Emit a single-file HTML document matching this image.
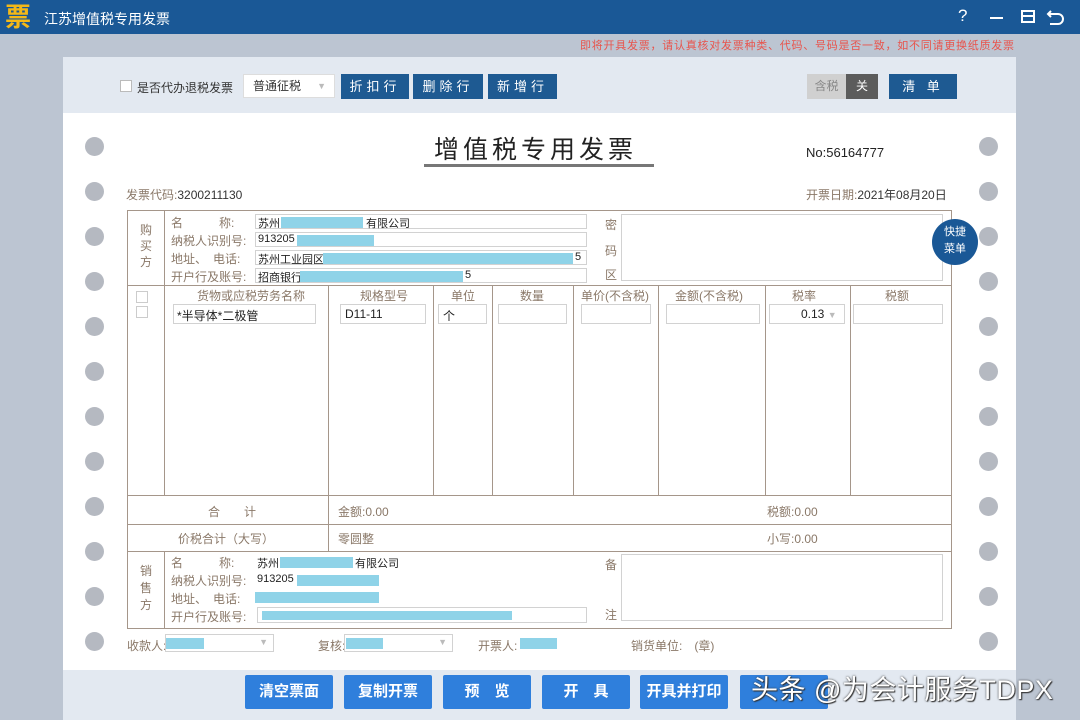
<!DOCTYPE html>
<html><head><meta charset="utf-8"><style>
*{margin:0;padding:0;box-sizing:border-box}
body{width:1080px;height:720px;overflow:hidden;background:#bcc5d2;font-family:"Liberation Sans","Noto Sans CJK SC",sans-serif;position:relative;font-size:12px;color:#333}
.a{position:absolute}
.hole{position:absolute;width:19px;height:19px;border-radius:50%;background:#b5b9c1}
.l{position:absolute;background:#a5968a}
.lb{position:absolute;color:#8a7868;font-size:12px;white-space:nowrap}
.box{position:absolute;border:1px solid #d2d2d2;background:#fff}
.bl{position:absolute;background:#8fd3e8;height:11px}
.tb{position:absolute;top:74px;height:25px;background:#1e5a92;color:#fff;font-size:13px;text-align:center;line-height:25px;letter-spacing:4px}
.bb{position:absolute;top:675px;height:34px;width:88px;background:#2f7fdc;color:#fff;font-size:15px;text-align:center;line-height:34px;border-radius:2px;font-weight:bold}
.t{position:absolute;font-size:11px;color:#222;white-space:nowrap}
</style></head><body>
<div class="a" style="left:0;top:0;width:1080px;height:34px;background:#1a5896"></div>
<div class="a" style="left:5px;top:2px;font-size:26px;font-weight:bold;color:#f3b818;line-height:30px">票</div>
<div class="a" style="left:44px;top:9px;color:#fff;font-size:14px">江苏增值税专用发票</div>
<div class="a" style="left:958px;top:6px;color:#fff;font-size:17px">?</div>
<div class="a" style="left:990px;top:17px;width:13px;height:2px;background:#fff"></div>
<div class="a" style="left:1021px;top:10px;width:14px;height:13px;border:2px solid #fff"></div>
<div class="a" style="left:1021px;top:15px;width:14px;height:2px;background:#fff"></div>
<svg class="a" style="left:1046px;top:7px" width="20" height="20"><path d="M5 4 L2 7 L5 10 M2 7 H12 A5 5 0 0 1 12 17 H4" fill="none" stroke="#fff" stroke-width="2"/></svg>
<div class="a" style="left:580px;top:37px;color:#e8544c;font-size:11px;letter-spacing:0.75px">即将开具发票，请认真核对发票种类、代码、号码是否一致，如不同请更换纸质发票</div>
<div class="a" style="left:63px;top:57px;width:953px;height:663px;background:#e3e9f1"></div>
<div class="a" style="left:63px;top:113px;width:953px;height:557px;background:#fff"></div>
<div class="a" style="left:120px;top:80px;width:12px;height:12px;border:1px solid #bbb;background:#fff"></div>
<div class="a" style="left:137px;top:79px;font-size:12px">是否代办退税发票</div>
<div class="a" style="left:243px;top:74px;width:92px;height:24px;background:#fff;border:1px solid #ddd;padding-left:9px;line-height:22px">普通征税<span style="position:absolute;right:8px;color:#bbb;font-size:9px">▼</span></div>
<div class="tb" style="left:341px;width:68px">折扣行</div>
<div class="tb" style="left:413px;width:70px">删除行</div>
<div class="tb" style="left:488px;width:69px">新增行</div>
<div class="a" style="left:807px;top:74px;width:39px;height:25px;background:#d0d0d0;color:#888;line-height:25px;text-align:center">含税</div>
<div class="a" style="left:846px;top:74px;width:32px;height:25px;background:#5c5c5c;color:#fff;line-height:25px;text-align:center">关</div>
<div class="tb" style="left:889px;width:68px">清 单</div>

<div class="a" style="left:434px;top:130px;font-size:25px;letter-spacing:4px;color:#222">增值税专用发票</div>
<div class="a" style="left:424px;top:164px;width:230px;height:3px;background:#777"></div>
<div class="a" style="left:806px;top:145px;font-size:13px;color:#222">No:56164777</div>
<div class="a" style="left:126px;top:186px;font-size:12px"><span style="color:#8a7868">发票代码:</span>3200211130</div>
<div class="a" style="left:806px;top:186px;font-size:12px"><span style="color:#8a7868">开票日期:</span>2021年08月20日</div>

<div class="l" style="left:127px;top:210px;width:825px;height:1px"></div>
<div class="l" style="left:127px;top:285px;width:825px;height:1px"></div>
<div class="l" style="left:127px;top:495px;width:825px;height:1px"></div>
<div class="l" style="left:127px;top:524px;width:825px;height:1px"></div>
<div class="l" style="left:127px;top:551px;width:825px;height:1px"></div>
<div class="l" style="left:127px;top:628px;width:825px;height:1px"></div>
<div class="l" style="left:127px;top:210px;width:1px;height:419px"></div>
<div class="l" style="left:951px;top:210px;width:1px;height:419px"></div>
<div class="l" style="left:164px;top:210px;width:1px;height:285px"></div>
<div class="l" style="left:164px;top:551px;width:1px;height:77px"></div>
<div class="l" style="left:328px;top:285px;width:1px;height:266px"></div>
<div class="l" style="left:433px;top:285px;width:1px;height:210px"></div>
<div class="l" style="left:492px;top:285px;width:1px;height:210px"></div>
<div class="l" style="left:573px;top:285px;width:1px;height:210px"></div>
<div class="l" style="left:658px;top:285px;width:1px;height:210px"></div>
<div class="l" style="left:765px;top:285px;width:1px;height:210px"></div>
<div class="l" style="left:850px;top:285px;width:1px;height:210px"></div>

<div class="lb" style="left:140px;top:222px;line-height:16px;white-space:normal;width:12px">购买方</div>
<div class="lb" style="left:171px;top:214px">名　　　称:</div>
<div class="lb" style="left:171px;top:232px">纳税人识别号:</div>
<div class="lb" style="left:171px;top:250px">地址、　电话:</div>
<div class="lb" style="left:171px;top:268px">开户行及账号:</div>
<div class="box" style="left:255px;top:214px;width:332px;height:15px"></div>
<div class="box" style="left:255px;top:232px;width:332px;height:15px"></div>
<div class="box" style="left:255px;top:250px;width:332px;height:15px"></div>
<div class="box" style="left:255px;top:268px;width:332px;height:15px"></div>
<div class="t" style="left:258px;top:215px">苏州</div><div class="bl" style="left:281px;top:217px;width:82px"></div><div class="t" style="left:366px;top:215px">有限公司</div>
<div class="t" style="left:258px;top:233px">913205</div><div class="bl" style="left:297px;top:235px;width:77px"></div>
<div class="t" style="left:258px;top:251px">苏州工业园区</div><div class="bl" style="left:323px;top:253px;width:250px"></div><div class="t" style="left:575px;top:251px">5</div>
<div class="t" style="left:258px;top:269px">招商银行</div><div class="bl" style="left:300px;top:271px;width:163px"></div><div class="t" style="left:465px;top:269px">5</div>
<div class="lb" style="left:605px;top:216px">密</div>
<div class="lb" style="left:605px;top:242px">码</div>
<div class="lb" style="left:605px;top:266px">区</div>
<div class="box" style="left:621px;top:214px;width:322px;height:67px"></div>
<div class="a" style="left:932px;top:219px;width:46px;height:46px;border-radius:50%;background:#1a5896;color:#fff;font-size:11px;text-align:center;line-height:17px;padding-top:5px">快捷<br>菜单</div>

<div class="a" style="left:136px;top:291px;width:12px;height:12px;border:1px solid #ccc"></div>
<div class="a" style="left:136px;top:306px;width:12px;height:12px;border:1px solid #ccc"></div>
<div class="lb" style="left:197px;top:287px">货物或应税劳务名称</div>
<div class="lb" style="left:360px;top:287px">规格型号</div>
<div class="lb" style="left:451px;top:287px">单位</div>
<div class="lb" style="left:520px;top:287px">数量</div>
<div class="lb" style="left:581px;top:287px">单价(不含税)</div>
<div class="lb" style="left:675px;top:287px">金额(不含税)</div>
<div class="lb" style="left:792px;top:287px">税率</div>
<div class="lb" style="left:885px;top:287px">税额</div>
<div class="box" style="left:173px;top:304px;width:143px;height:20px;padding:2px 3px;font-size:12px;color:#222">*半导体*二极管</div>
<div class="box" style="left:340px;top:304px;width:86px;height:20px;padding:2px 4px;font-size:12px;color:#222">D11-11</div>
<div class="box" style="left:438px;top:304px;width:49px;height:20px;padding:2px 4px;font-size:12px;color:#222">个</div>
<div class="box" style="left:498px;top:304px;width:69px;height:20px"></div>
<div class="box" style="left:581px;top:304px;width:70px;height:20px"></div>
<div class="box" style="left:666px;top:304px;width:94px;height:20px"></div>
<div class="box" style="left:769px;top:304px;width:76px;height:20px;padding:2px 0 0 31px;font-size:12px;color:#222">0.13 <span style="color:#bbb;font-size:9px">▼</span></div>
<div class="box" style="left:853px;top:304px;width:90px;height:20px"></div>

<div class="lb" style="left:208px;top:503px">合　　计</div>
<div class="lb" style="left:338px;top:503px">金额:0.00</div>
<div class="lb" style="left:767px;top:503px">税额:0.00</div>
<div class="lb" style="left:178px;top:530px">价税合计（大写）</div>
<div class="lb" style="left:338px;top:530px">零圆整</div>
<div class="lb" style="left:767px;top:530px">小写:0.00</div>

<div class="lb" style="left:140px;top:563px;line-height:17px;white-space:normal;width:12px">销售方</div>
<div class="lb" style="left:171px;top:554px">名　　　称:</div>
<div class="lb" style="left:171px;top:572px">纳税人识别号:</div>
<div class="lb" style="left:171px;top:590px">地址、　电话:</div>
<div class="lb" style="left:171px;top:608px">开户行及账号:</div>
<div class="t" style="left:257px;top:555px">苏州</div><div class="bl" style="left:280px;top:557px;width:73px"></div><div class="t" style="left:355px;top:555px">有限公司</div>
<div class="t" style="left:257px;top:573px">913205</div><div class="bl" style="left:297px;top:575px;width:82px"></div>
<div class="bl" style="left:255px;top:592px;width:124px"></div>
<div class="box" style="left:257px;top:607px;width:330px;height:16px"></div>
<div class="bl" style="left:262px;top:611px;width:250px;height:9px"></div>
<div class="lb" style="left:605px;top:556px">备</div>
<div class="lb" style="left:605px;top:606px">注</div>
<div class="box" style="left:621px;top:554px;width:322px;height:67px"></div>

<div class="lb" style="left:127px;top:637px">收款人:</div>
<div class="box" style="left:165px;top:634px;width:109px;height:18px"><span style="position:absolute;right:5px;top:2px;color:#bbb;font-size:9px">▼</span></div>
<div class="bl" style="left:166px;top:638px;width:38px"></div>
<div class="lb" style="left:318px;top:637px">复核:</div>
<div class="box" style="left:344px;top:634px;width:109px;height:18px"><span style="position:absolute;right:5px;top:2px;color:#bbb;font-size:9px">▼</span></div>
<div class="bl" style="left:346px;top:638px;width:37px"></div>
<div class="lb" style="left:478px;top:637px">开票人:</div>
<div class="bl" style="left:520px;top:638px;width:37px"></div>
<div class="lb" style="left:631px;top:637px">销货单位:　(章)</div>

<div class="bb" style="left:245px">清空票面</div>
<div class="bb" style="left:344px">复制开票</div>
<div class="bb" style="left:443px">预　览</div>
<div class="bb" style="left:542px">开　具</div>
<div class="bb" style="left:640px">开具并打印</div>
<div class="bb" style="left:740px"></div>
<div class="a" style="left:751px;top:668px;font-size:27px;letter-spacing:0.5px;color:#fff;text-shadow:0 0 2px #333,1px 1px 1px #333;white-space:nowrap">头条 @为会计服务TDPX</div>

<div class="hole" style="left:85px;top:137px"></div><div class="hole" style="left:979px;top:137px"></div>
<div class="hole" style="left:85px;top:182px"></div><div class="hole" style="left:979px;top:182px"></div>
<div class="hole" style="left:85px;top:227px"></div><div class="hole" style="left:979px;top:227px"></div>
<div class="hole" style="left:85px;top:272px"></div><div class="hole" style="left:979px;top:272px"></div>
<div class="hole" style="left:85px;top:317px"></div><div class="hole" style="left:979px;top:317px"></div>
<div class="hole" style="left:85px;top:362px"></div><div class="hole" style="left:979px;top:362px"></div>
<div class="hole" style="left:85px;top:407px"></div><div class="hole" style="left:979px;top:407px"></div>
<div class="hole" style="left:85px;top:452px"></div><div class="hole" style="left:979px;top:452px"></div>
<div class="hole" style="left:85px;top:497px"></div><div class="hole" style="left:979px;top:497px"></div>
<div class="hole" style="left:85px;top:542px"></div><div class="hole" style="left:979px;top:542px"></div>
<div class="hole" style="left:85px;top:587px"></div><div class="hole" style="left:979px;top:587px"></div>
<div class="hole" style="left:85px;top:632px"></div><div class="hole" style="left:979px;top:632px"></div>
</body></html>
